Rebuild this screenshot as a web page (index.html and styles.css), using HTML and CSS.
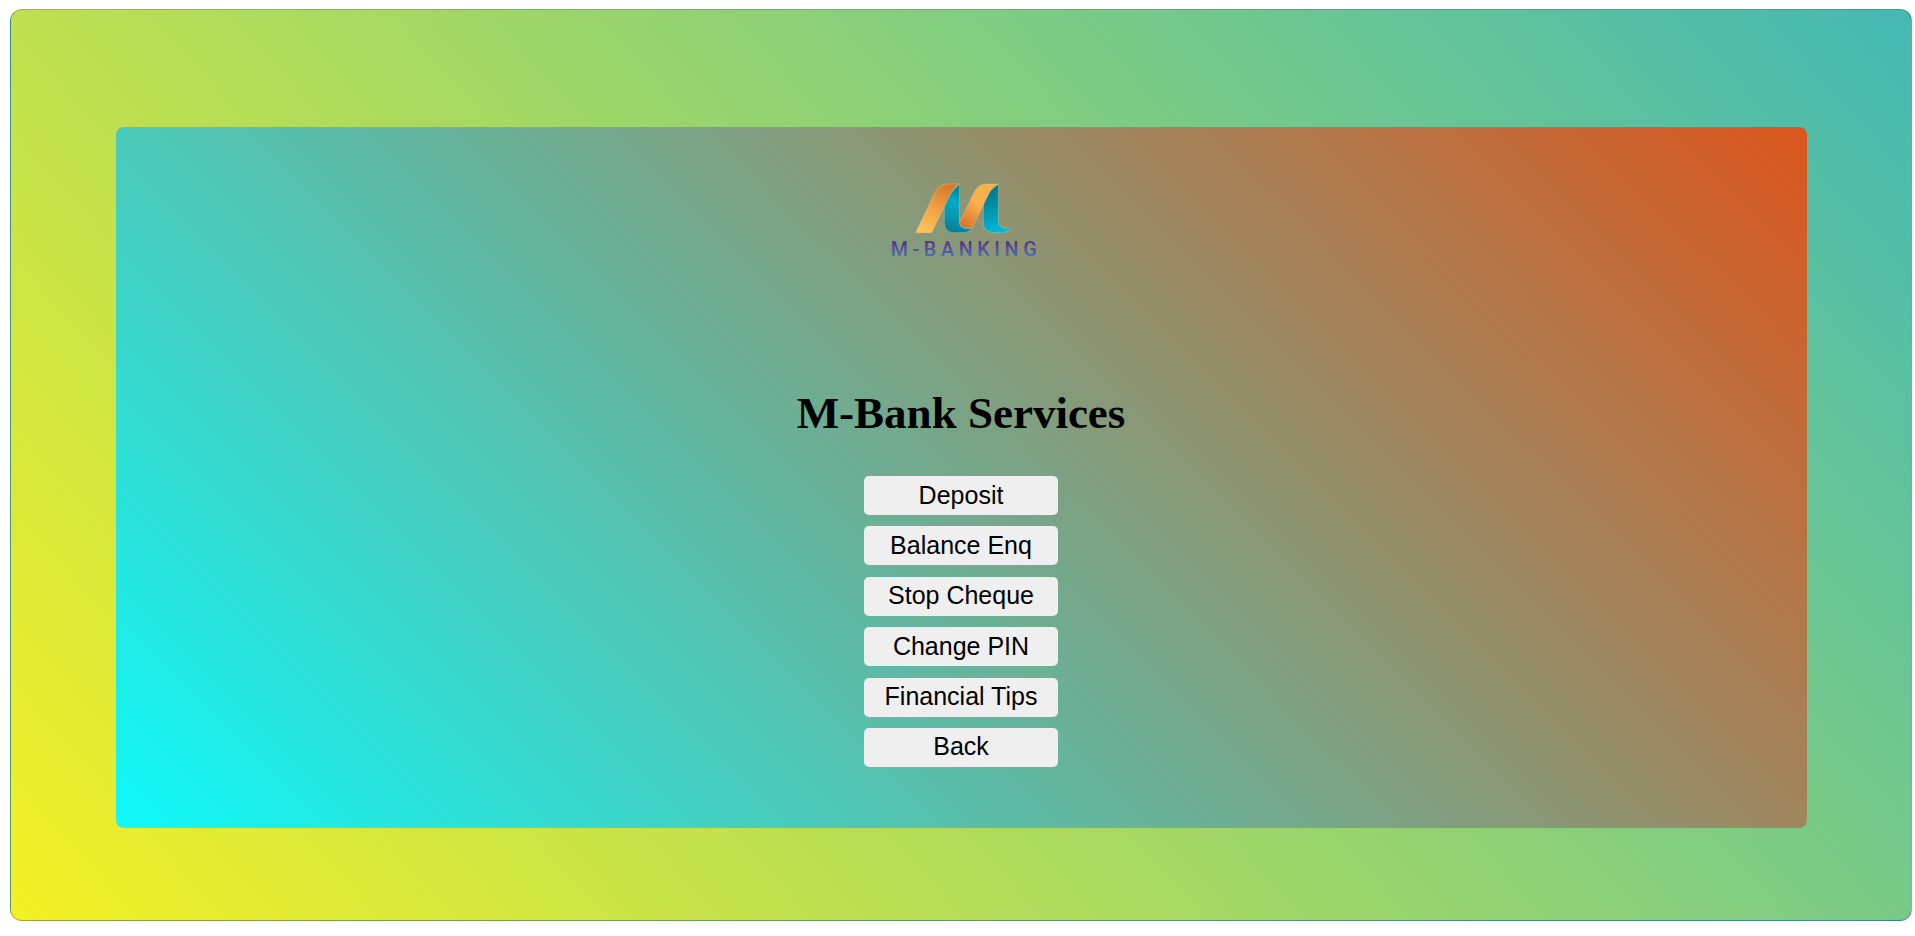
FILE: index.html
```
<!DOCTYPE html>
<html lang="en">
<head>
<meta charset="utf-8">
<title>M-Bank Services</title>
<link rel="stylesheet" href="styles.css">
</head>
<body>
<div class="page">
  <main class="panel">
    <svg class="logo" viewBox="-13 0 510 300" role="img" aria-label="M-Banking">
      <defs>
        <linearGradient id="gold1" x1="0.7" y1="0" x2="0.2" y2="1">
          <stop offset="0" stop-color="#d8782c"/><stop offset="0.5" stop-color="#f0a040"/><stop offset="1" stop-color="#ffc35a"/>
        </linearGradient>
        <linearGradient id="gold2" x1="0.8" y1="0" x2="0.1" y2="1">
          <stop offset="0" stop-color="#f5b04c"/><stop offset="0.45" stop-color="#fbb04c"/><stop offset="1" stop-color="#d5702a"/>
        </linearGradient>
        <linearGradient id="teal1" x1="0.7" y1="0" x2="0.5" y2="1">
          <stop offset="0" stop-color="#006f80"/><stop offset="0.4" stop-color="#00a9c8"/><stop offset="0.7" stop-color="#0799b4"/><stop offset="1" stop-color="#087f94"/>
        </linearGradient>
        <linearGradient id="teal2" x1="0.4" y1="0" x2="0.6" y2="1">
          <stop offset="0" stop-color="#00707f"/><stop offset="0.4" stop-color="#008fa5"/><stop offset="1" stop-color="#00b9dc"/>
        </linearGradient>
        <linearGradient id="ink" x1="0" y1="0" x2="0" y2="1">
          <stop offset="0.25" stop-color="#57398a"/><stop offset="0.8" stop-color="#4a72b4"/>
        </linearGradient>
      </defs>
      <g class="logo-mark">
        <path fill="url(#teal1)" d="M237 43V156Q238 174 256 175H273Q268 187 252 188H222Q193 187 192 159V104Q197 84 212 70Z"/>
        <path fill="url(#gold1)" d="M106 188L163 69Q175 43 199 42H237Q222 48 213 66L154 188Z"/>
        <path fill="url(#teal2)" d="M354 43V154Q355 174 372 175H390Q386 187 370 188H340Q309 187 309 157V104Q313 82 328 65Z"/>
        <path fill="url(#gold2)" d="M238 157L281 68Q293 43 317 42H354Q337 48 328 66L275 174H256Q241 173 238 157Z"/>
      </g>
      <text class="logo-text" x="31" y="258" fill="url(#ink)">M-BANKING</text>
    </svg>
    <h1 class="title">M-Bank Services</h1>
    <div class="services">
      <button class="service" type="button">Deposit</button>
      <button class="service" type="button">Balance Enq</button>
      <button class="service" type="button">Stop Cheque</button>
      <button class="service" type="button">Change PIN</button>
      <button class="service" type="button">Financial Tips</button>
      <button class="service" type="button">Back</button>
    </div>
  </main>
</div>
</body>
</html>
```
FILE: styles.css
```
* {
  box-sizing: border-box;
}

body {
  margin: 0;
  background: #fff;
  font-family: "Liberation Serif", serif;
  color: #000;
}

.page {
  margin: 9px 3px 15px 10px;
  padding: 117px 104px 92px 105px;
  border: 1px solid rgba(0, 0, 0, 0.25);
  border-radius: 12px;
  background: linear-gradient(48deg, #f4f124, #44b9b3);
}

.panel {
  display: flex;
  flex-direction: column;
  align-items: center;
  padding: 43px 21px 61px 20px;
  border-radius: 8px;
  background: linear-gradient(45deg, #0ef9f9, #dc561e);
}

.logo {
  width: 170px;
  height: 100px;
}

.logo-mark {
  stroke: rgba(235, 215, 170, 0.45);
  stroke-width: 2;
}

.logo-text {
  font: 500 59px Roboto, sans-serif;
  letter-spacing: 14px;
}

.title {
  margin: 117px 0 37px;
  font-size: 45px;
  line-height: 52px;
  font-weight: bold;
}

.services {
  display: flex;
  flex-direction: column;
  justify-content: space-between;
  width: 194px;
  min-height: 291px;
}

.service {
  height: 39px;
  padding: 0 0 1px;
  border: 0;
  border-radius: 5px;
  background: #efefef;
  color: #000;
  font: 25px "Liberation Sans", sans-serif;
}
```
